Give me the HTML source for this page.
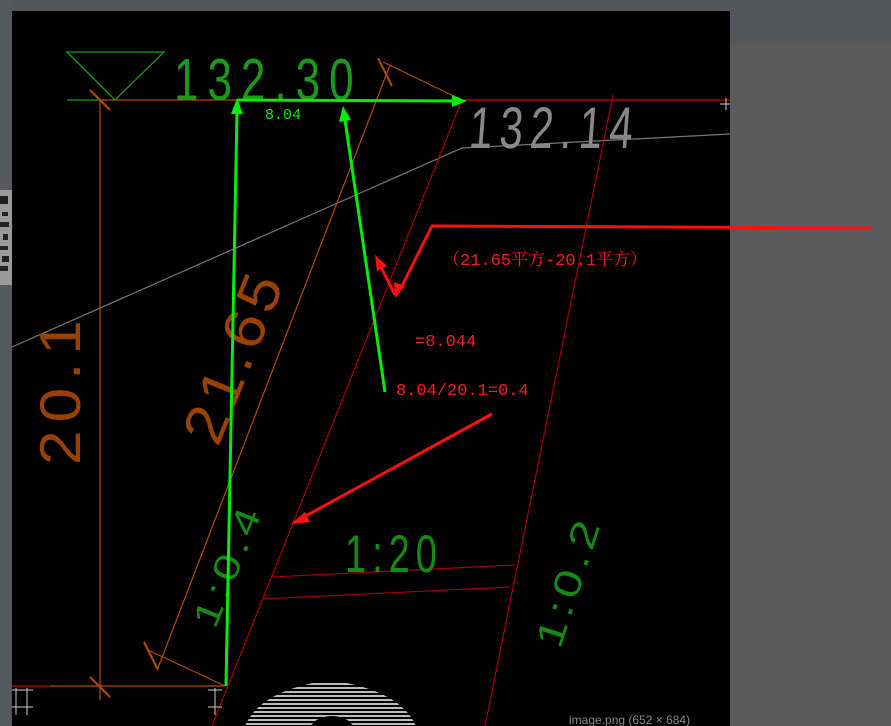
<!DOCTYPE html>
<html><head><meta charset="utf-8"><style>
html,body{margin:0;padding:0;width:891px;height:726px;overflow:hidden;background:#5a5a5a}
svg{position:absolute;left:0;top:0}
</style></head><body>
<svg width="891" height="726" viewBox="0 0 891 726" xmlns="http://www.w3.org/2000/svg">
<rect x="0" y="0" width="891" height="726" fill="#5a5a5a"/>
<rect x="0" y="0" width="891" height="11" fill="#55565a"/>
<rect x="730" y="0" width="161" height="43" fill="#55565a"/>
<rect x="0" y="0" width="12" height="726" fill="#57585c"/>
<rect x="0" y="190" width="12" height="95" fill="#9a9a9a"/>
<g fill="#222"><rect x="0" y="196" width="8" height="8"/><rect x="2" y="212" width="6" height="4"/><rect x="0" y="222" width="9" height="5"/><rect x="3" y="234" width="5" height="6"/><rect x="0" y="246" width="8" height="4"/><rect x="2" y="256" width="7" height="6"/><rect x="0" y="266" width="8" height="5"/></g>
<rect x="12" y="11" width="718" height="715" fill="#000"/>

<polyline points="12,347 462,148 730,134" fill="none" stroke="#777" stroke-width="1.2"/>
<line x1="67" y1="100" x2="100" y2="100" stroke="#1a9a1a" stroke-width="1.3"/>
<line x1="100" y1="100" x2="462" y2="100" stroke="#b34a00" stroke-width="1.3"/>
<line x1="462" y1="100" x2="730" y2="100" stroke="#d00000" stroke-width="1.3"/>
<polygon points="67,52 164,52 115,100" fill="none" stroke="#1a9a1a" stroke-width="1.3"/>
<g stroke="#b34a00" stroke-width="1.2" fill="none">
<line x1="100" y1="100" x2="100" y2="700"/>
<line x1="50" y1="686" x2="225" y2="686"/>
<line x1="90" y1="90" x2="110" y2="110" stroke-width="2"/>
<line x1="90" y1="677" x2="110" y2="697" stroke-width="2"/>
<line x1="390" y1="65" x2="158" y2="668"/>
<line x1="462" y1="100" x2="383" y2="62"/>
<line x1="225" y1="686" x2="148" y2="650"/>
<line x1="378" y1="58" x2="392" y2="86" stroke-width="2"/>
<line x1="144" y1="642" x2="158" y2="670" stroke-width="2"/>
</g>
<line x1="12" y1="686" x2="50" y2="686" stroke="#c00000" stroke-width="1.3"/>
<g stroke="#b00000" stroke-width="1.1" fill="none">
<line x1="462" y1="100" x2="212" y2="726"/>
<line x1="613" y1="95" x2="485" y2="726"/>
<line x1="271" y1="577" x2="515" y2="565"/>
<line x1="262" y1="599" x2="510" y2="587"/>
</g>
<g stroke="#ccc" stroke-width="1">
<path d="M12,690 H33 M12,707 H33 M16,688 V715 M27,688 V715"/>
<path d="M208,690 H222 M208,707 H222 M215,688 V715"/>
<path d="M720,104 H730 M726,98 V110"/>
</g>
<g font-family="'Liberation Sans',sans-serif" stroke="none">
<text x="174" y="100" font-size="44" fill="#1a9a1a" transform="translate(174,100) scale(1,1.35) translate(-174,-100)" letter-spacing="9">132.30</text>
<text x="468" y="148" font-size="42" fill="#888" transform="translate(468,148) scale(1,1.4) skewX(-6) translate(-468,-148)" letter-spacing="7">132.14</text>
<text x="0" y="0" font-size="48" fill="#9a4000" transform="translate(80,465) rotate(-90) scale(1.3,1.2)" letter-spacing="6">20.1</text>
<text x="0" y="0" font-size="48" fill="#9a4000" transform="translate(218,448) rotate(-68) scale(1.3,1.2)" letter-spacing="4">21.65</text>
<text x="0" y="0" font-size="36" fill="#168a16" transform="translate(215,630) rotate(-68) scale(1.3,1)" letter-spacing="4">1:0.4</text>
<text x="345" y="572" font-size="38" fill="#168a16" transform="translate(345,572) scale(1,1.4) translate(-345,-572)" letter-spacing="6">1:20</text>
<text x="0" y="0" font-size="38" fill="#168a16" transform="translate(560,650) rotate(-72) scale(1.3,1)" letter-spacing="4">1:0.2</text>
</g>
<g stroke="#00ee00" stroke-width="3" fill="#00ee00">
<line x1="226" y1="686" x2="237" y2="112"/>
<polygon points="237,98 231,114 243,114" stroke="none"/>
<line x1="237" y1="100" x2="455" y2="101"/>
<polygon points="467,101 452,95 452,107" stroke="none"/>
<line x1="385" y1="392" x2="345" y2="120"/>
<polygon points="343,106 339,122 351,120" stroke="none"/>
</g>
<text x="265" y="119" font-family="'Liberation Mono',monospace" font-size="15" fill="#00ee00">8.04</text>
<g stroke="#ff1010" stroke-width="3" fill="#ff1010">
<polyline points="872,228 432,226 400,290" fill="none"/>
<polygon points="395,298 394,282 405,286" stroke="none"/>
<line x1="395" y1="295" x2="380" y2="265"/>
<polygon points="375,255 377,271 387,266" stroke="none"/>
<line x1="492" y1="414" x2="302" y2="518"/>
<polygon points="291,524 305,512 310,522" stroke="none"/>
</g>
<g font-family="'Liberation Mono','Noto Serif CJK SC',monospace" font-size="17" fill="#ff1a1a">
<text x="443" y="265">（21.65平方-20.1平方）</text>
<text x="415" y="346">=8.044</text>
<text x="396" y="395">8.04/20.1=0.4</text>
</g>
<clipPath id="c"><path d="M245,726 Q260,690 330,680 Q400,690 416,726 Z"/></clipPath>
<g clip-path="url(#c)">
<rect x="240" y="678" width="180" height="48" fill="#000"/>
<g stroke="#bbb" stroke-width="2">
<line x1="240" y1="684" x2="420" y2="684"/><line x1="240" y1="688" x2="420" y2="688"/>
<line x1="240" y1="692" x2="420" y2="692"/><line x1="240" y1="696" x2="420" y2="696"/>
<line x1="240" y1="700" x2="420" y2="700"/><line x1="240" y1="704" x2="420" y2="704"/>
<line x1="240" y1="708" x2="420" y2="708"/><line x1="240" y1="712" x2="420" y2="712"/>
<line x1="240" y1="716" x2="420" y2="716"/><line x1="240" y1="720" x2="420" y2="720"/>
<line x1="240" y1="724" x2="420" y2="724"/>
</g>
<ellipse cx="332" cy="730" rx="22" ry="14" fill="#000"/>
</g>
<text x="569" y="724" font-family="'Liberation Sans',sans-serif" font-size="12" fill="#888">image.png (652 × 684)</text>
</svg>
</body></html>
